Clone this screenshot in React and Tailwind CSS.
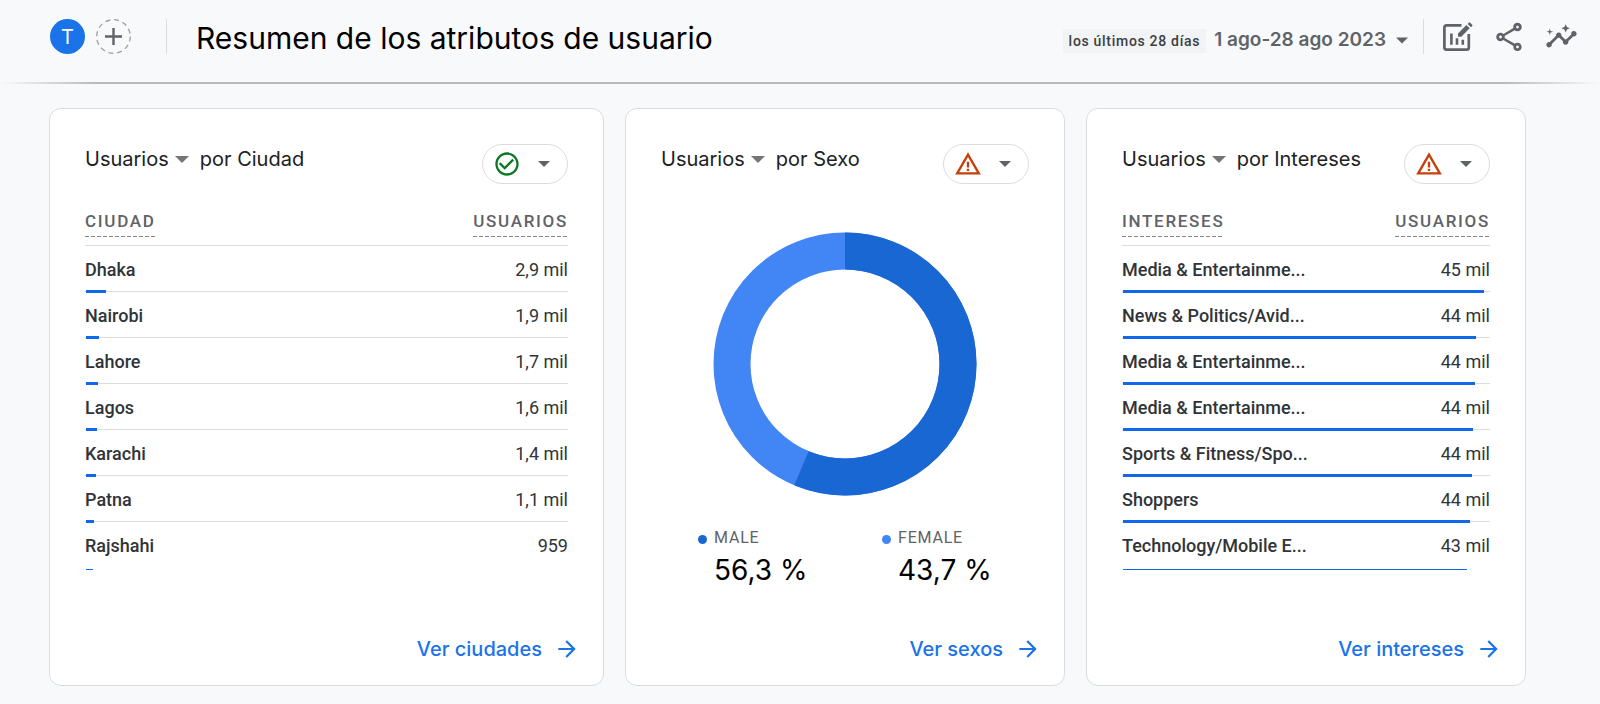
import { MdArrowForward, MdCheckCircleOutline, MdInsights, MdOutlineShare, MdWarningAmber } from 'react-icons/md';

const cities = [
  { name: 'Dhaka', value: '2,9 mil', share: 4.2 },
  { name: 'Nairobi', value: '1,9 mil', share: 2.7 },
  { name: 'Lahore', value: '1,7 mil', share: 2.5 },
  { name: 'Lagos', value: '1,6 mil', share: 2.3 },
  { name: 'Karachi', value: '1,4 mil', share: 2.1 },
  { name: 'Patna', value: '1,1 mil', share: 1.6 },
  { name: 'Rajshahi', value: '959', share: 1.4 },
];

const interests = [
  { name: 'Media & Entertainme...', value: '45 mil', share: 98.2 },
  { name: 'News & Politics/Avid...', value: '44 mil', share: 96 },
  { name: 'Media & Entertainme...', value: '44 mil', share: 95.7 },
  { name: 'Media & Entertainme...', value: '44 mil', share: 95.2 },
  { name: 'Sports & Fitness/Spo...', value: '44 mil', share: 94.8 },
  { name: 'Shoppers', value: '44 mil', share: 94.4 },
  { name: 'Technology/Mobile E...', value: '43 mil', share: 93.5 },
];

function Caret({ className }) {
  return (
    <svg viewBox="0 0 14 7" className={className} fill="currentColor" aria-hidden="true">
      <path d="M0 0h14L7 7z" />
    </svg>
  );
}

function EditChartIcon() {
  return (
    <svg viewBox="0 0 30 30" className="h-[30px] w-[30px]" fill="none" stroke="currentColor" aria-hidden="true">
      <path d="M18.5 3.4H3.4a2 2 0 0 0-2 2v20.2a2 2 0 0 0 2 2h20.4a2 2 0 0 0 2-2V12" strokeWidth="2.7" />
      <path d="M8.4 11.5v11.3M14 16.2v6.6M19.8 17.8v5" strokeWidth="2.6" />
      <path d="M15 14.8v-3.4l8.4-8.4 3.3 3.3-8.4 8.5zM24.6 1.9l1.2-1.2a1 1 0 0 1 1.4 0l2 2a1 1 0 0 1 0 1.4L28 5.3z" fill="currentColor" stroke="none" />
    </svg>
  );
}

function Card({ dimension, ok, link, children }) {
  return (
    <section className="flex flex-col rounded-xl border border-[#dadce0] bg-white px-[35px] pt-[35px] pb-[23px]">
      <div className="flex items-start justify-between">
        <h2 className="flex items-center pt-[3px] text-xl leading-6 text-[#202124]">
          <button type="button" className="flex items-center gap-1.5">
            Usuarios
            <Caret className="h-[7px] w-3.5 text-[#757575]" />
          </button>
          <span className="ml-[11px]">por {dimension}</span>
        </h2>
        <button
          type="button"
          aria-label="Calidad de los datos"
          className="flex h-10 w-[86px] items-center justify-between rounded-full border border-[#dadce0] pr-[17px] pl-2.5 text-[#5f6368]"
        >
          {ok ? <MdCheckCircleOutline size={28} color="#0b7724" /> : <MdWarningAmber size={28} color="#c5400a" />}
          <Caret className="h-1.5 w-3" />
        </button>
      </div>
      {children}
      <div className="-mr-3 mt-auto flex justify-end">
        <a href="#" className="flex items-center gap-3 text-xl leading-6 font-medium text-[#1a73e8]">
          {link}
          <MdArrowForward size={26} />
        </a>
      </div>
    </section>
  );
}

function ColumnTitle({ children }) {
  return (
    <span className="inline-block bg-[repeating-linear-gradient(90deg,#80868b_0_4px,transparent_4px_6px)] bg-[length:100%_1px] bg-bottom bg-no-repeat pb-1.5 text-[17px] leading-5 font-medium tracking-widest text-[#5f6368]">
      {children}
    </span>
  );
}

function DataTable({ title, rows }) {
  return (
    <table className="mt-[23px] w-full font-[Roboto,sans-serif] text-lg text-[#303438]">
      <thead>
        <tr className="h-[38px] border-b border-[#dadce0]">
          <th className="p-0 pb-2 text-left align-bottom"><ColumnTitle>{title}</ColumnTitle></th>
          <th className="p-0 pb-2 text-right align-bottom"><ColumnTitle>USUARIOS</ColumnTitle></th>
        </tr>
      </thead>
      <tbody>
        {rows.map((row, i) => (
          <tr key={i} className="group relative h-[46px] border-b border-[#dadce0] last:border-0">
            <td className="p-0 pt-0.5 text-left font-medium">
              {row.name}
              <span
                className="absolute -bottom-0.5 left-px h-[3px] bg-[#0f69ea] group-last:h-px"
                style={{ width: `${row.share}%` }}
              />
            </td>
            <td className="p-0 pt-0.5 text-right">{row.value}</td>
          </tr>
        ))}
      </tbody>
    </table>
  );
}

function Donut({ percent }) {
  return (
    <svg viewBox="0 0 264 264" className="mx-auto mt-12 h-[264px] w-[264px]" fill="none" strokeWidth="37" role="img" aria-label="Usuarios por sexo">
      <circle cx="132" cy="132" r="113" stroke="#4285f4" />
      <circle
        cx="132"
        cy="132"
        r="113"
        stroke="#1967d2"
        pathLength="100"
        strokeDasharray={`${percent} 100`}
        transform="rotate(-90 132 132)"
      />
    </svg>
  );
}

function LegendItem({ label, value, dot }) {
  return (
    <div className="flex gap-[7px] pl-[37px]">
      <span className={`mt-[7px] h-[9px] w-[9px] rounded-full ${dot}`} />
      <div>
        <dt className="font-[Roboto,sans-serif] text-base leading-5 tracking-wider text-[#5f6368]">{label}</dt>
        <dd className="mt-0.5 text-[28px] leading-10 text-black">{value}</dd>
      </div>
    </div>
  );
}

export default function App() {
  return (
    <div className="min-h-screen bg-[#f8f9fb] font-[Inter,sans-serif] text-[#202124]">
      <header className="flex h-[82px] items-start pr-[22px] pl-[50px] pt-[19px]">
        <div className="flex h-[35px] flex-1 items-center">
          <button type="button" className="h-[35px] w-[35px] rounded-full bg-[#1a73e8] text-xl text-white">T</button>
          <button type="button" aria-label="Añadir comparación" className="ml-[11px] text-[#5f6368]">
            <svg viewBox="0 0 35 35" className="h-[35px] w-[35px]" fill="none" stroke="currentColor">
              <circle cx="17.5" cy="17.5" r="16.8" stroke="#9aa0a6" strokeWidth="1.3" strokeDasharray="5 3.8" />
              <path d="M17.5 9v17M9 17.5h17" strokeWidth="2.4" />
            </svg>
          </button>
          <span className="ml-[35px] h-full w-px bg-[#dadce0]" />
          <h1 className="ml-[29px] pt-0.5 text-3xl leading-9 text-black">Resumen de los atributos de usuario</h1>
        </div>
        <div className="flex h-[35px] items-center text-[#5f6368]">
          <div className="flex items-center gap-2 pt-2">
            <span className="bg-[#f1f3f4] px-1.5 font-[Roboto,sans-serif] text-sm leading-6 font-medium tracking-wider text-[#3c4043]">los últimos 28 días</span>
            <button type="button" className="flex items-center gap-2.5 text-[19px] font-semibold">
              1 ago-28 ago 2023
              <Caret className="h-[7px] w-3" />
            </button>
          </div>
          <span className="ml-[15px] h-full w-px bg-[#dadce0]" />
          <button type="button" aria-label="Personalizar informe" className="ml-[19px]"><EditChartIcon /></button>
          <button type="button" aria-label="Compartir" className="ml-[19px]"><MdOutlineShare size={34} /></button>
          <button type="button" aria-label="Estadísticas" className="ml-[19px]"><MdInsights size={33} /></button>
        </div>
      </header>
      <div className="h-0.5 bg-[linear-gradient(90deg,transparent,#b8babd_6%,#b8babd_94%,transparent)]" />
      <main className="grid grid-cols-[555fr_440fr_440fr] gap-[21px] pt-6 pr-[74px] pb-[18px] pl-[49px]">
        <Card dimension="Ciudad" ok link="Ver ciudades">
          <DataTable title="CIUDAD" rows={cities} />
        </Card>
        <Card dimension="Sexo" link="Ver sexos">
          <Donut percent={56.3} />
          <dl className="mt-8 mb-[46px] grid grid-cols-2">
            <LegendItem label="MALE" value="56,3 %" dot="bg-[#1967d2]" />
            <LegendItem label="FEMALE" value="43,7 %" dot="bg-[#4285f4]" />
          </dl>
        </Card>
        <Card dimension="Intereses" link="Ver intereses">
          <DataTable title="INTERESES" rows={interests} />
        </Card>
      </main>
    </div>
  );
}
